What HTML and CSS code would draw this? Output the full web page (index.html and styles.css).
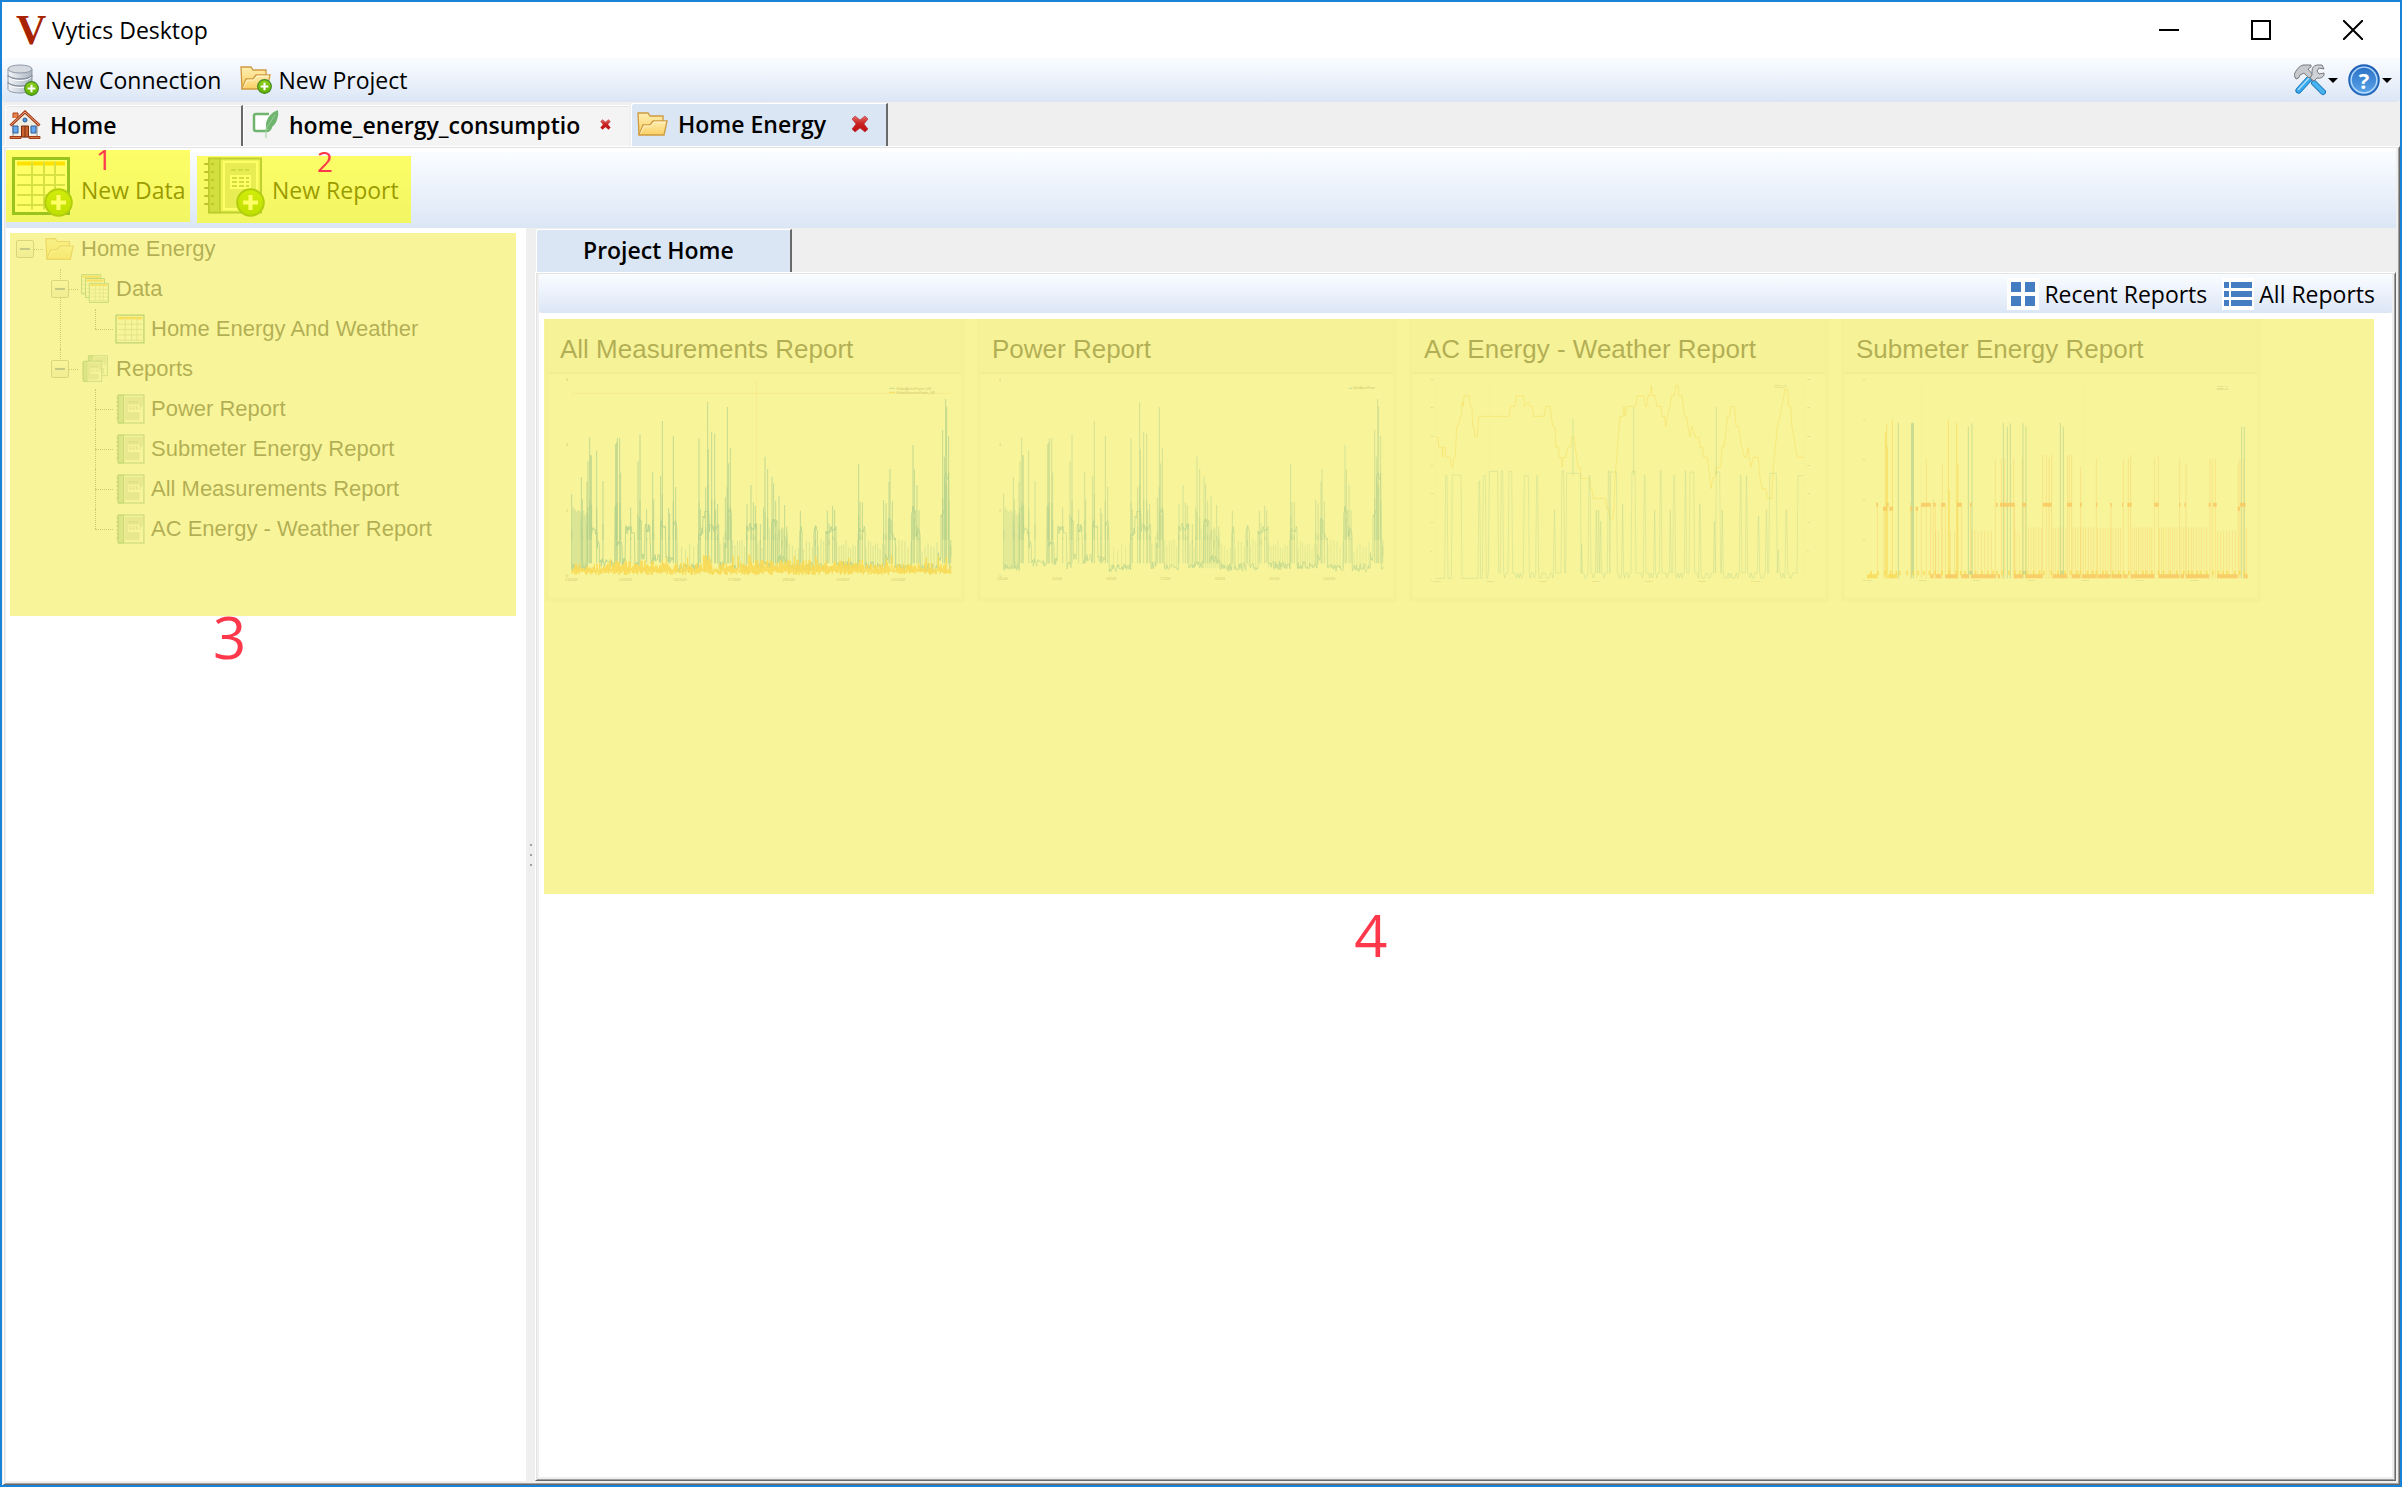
FILE: index.html
```html
<!DOCTYPE html>
<html lang="en">
<head>
<meta charset="utf-8">
<title>Vytics Desktop</title>
<link rel="stylesheet" href="styles.css">
</head>
<body>
<svg class="defs" aria-hidden="true">
  <defs>
    <linearGradient id="g-metal"><stop offset="0" stop-color="#f4f6f8"/><stop offset=".4" stop-color="#d5dbe2"/><stop offset="1" stop-color="#aab3be"/></linearGradient>
    <linearGradient id="g-folder" x2="0" y2="1"><stop offset="0" stop-color="#ffeeb0"/><stop offset="1" stop-color="#f9cf63"/></linearGradient>
    <linearGradient id="g-green" x2="0" y2="1"><stop offset="0" stop-color="#8ed01c"/><stop offset="1" stop-color="#5fb000"/></linearGradient>
    <linearGradient id="g-blue" x2="0" y2="1"><stop offset="0" stop-color="#2a6fc4"/><stop offset="1" stop-color="#5aa5ea"/></linearGradient>
    <linearGradient id="g-red" x2="0" y2="1"><stop offset="0" stop-color="#e26a66"/><stop offset=".5" stop-color="#c92020"/><stop offset="1" stop-color="#c01010"/></linearGradient>
    <symbol id="plus" viewBox="0 0 14 14">
      <circle cx="7" cy="7" r="6.4" fill="url(#g-green)" stroke="#3f8423" stroke-width="1"/>
      <path d="M7 3.4v7.2M3.4 7h7.2" stroke="#fff" stroke-width="2"/>
    </symbol>
    <symbol id="database" viewBox="0 0 32 32">
      <path d="M1 5v20c0 2 5 4 12 4s12-2 12-4V5z" fill="url(#g-metal)" stroke="#8e98a6"/>
      <path d="M1 11c0 2 5 4 12 4s12-2 12-4M1 18c0 2 5 4 12 4s12-2 12-4" fill="none" stroke="#8b95a3" stroke-width="1.4"/>
      <path d="M2 13c1 2 5 3.500 11 3.500s10-1.500 11-3.500M2 20c1 2 5 3.500 11 3.500s10-1.500 11-3.500" fill="none" stroke="#fff"/>
      <ellipse cx="13" cy="5" rx="12" ry="4" fill="#d5dae0" stroke="#8e98a6"/>
      <use href="#plus" x="17" y="17" width="15" height="15"/>
    </symbol>
    <symbol id="folder" viewBox="0 0 32 26">
      <path d="M2 24L1 2h10l2 3h13v8" fill="url(#g-folder)" stroke="#cf9a3e" stroke-width="1.300"/>
      <path d="M2 24l4-10h7l3-4h14l-3 14z" fill="url(#g-folder)" stroke="#cf9a3e" stroke-width="1.300"/>
      <path d="M3.500 22.500l3.500-7.500h7l3-4h12" fill="none" stroke="#fff6cf"/>
    </symbol>
    <symbol id="folder-plus" viewBox="0 0 32 32">
      <use href="#folder" x="0" y="1" width="32" height="26"/>
      <use href="#plus" x="17" y="15" width="15" height="15"/>
    </symbol>
    <symbol id="house" viewBox="0 0 32 30">
      <path d="M4 8V3h5v5" fill="#e8834a" stroke="#a8431a"/>
      <path d="M4 14L16 3l12 11v13H4z" fill="#efeee0" stroke="#8c8c80"/>
      <path d="M1.500 15.500L16 2l14.500 13.500" fill="none" stroke="#a33d17" stroke-width="3"/>
      <path d="M1.800 15L16 2l14.200 13" fill="none" stroke="#f0a884" stroke-width="1"/>
      <circle cx="16" cy="10" r="2" fill="#4f9bea" stroke="#2b5791"/>
      <path d="M4 16h5v7H4zM22 16h5v7h-5z" fill="#63a9f2" stroke="#355f96"/>
      <path d="M12.500 16h7v11h-7z" fill="#c8622e" stroke="#7c2d0e"/>
      <path d="M16 16v11" stroke="#7c2d0e"/>
      <path d="M1 26.500h11v2H1zM20 26.500h11v2H20z" fill="#d87a45" stroke="#a33d17"/>
    </symbol>
    <symbol id="quill" viewBox="0 0 27 31">
      <path d="M17 5H4Q2 5 2 7v13q0 2 2 2h10q4 0 5-4" fill="#fff" stroke="#70b56f" stroke-width="2.500"/>
      <path d="M26 1C20 3 15 8 14 15l0 6q9-3 11-10 2-5 1-10z" fill="#70b56f"/>
      <path d="M23 6l-9 14v9" fill="none" stroke="#9bd09a" stroke-width="1"/>
    </symbol>
    <symbol id="cross" viewBox="0 0 18 18">
      <path d="M1 4l3-3 5 4 5-4 3 3-4 5 4 5-3 3-5-4-5 4-3-3 4-5z" fill="url(#g-red)" stroke="#b03030" stroke-width=".6"/>
    </symbol>
    <symbol id="table" viewBox="0 0 28 28">
      <path d="M1 1h26v26H1z" fill="#fff" stroke="#2f8a6a" stroke-width="1.200"/>
      <path d="M2.500 2.500h23v2.500h-23z" fill="#ffb219"/>
      <path d="M2.500 9.500h23M2.500 14.500h23M2.500 19.500h23M2.500 24.500h23M9.500 2.500v23M15.500 2.500v23M20.500 2.500v23" stroke="#a9c4b8" stroke-width=".9"/>
    </symbol>
    <symbol id="tables" viewBox="0 0 30 32">
      <use href="#table" x="0" y="0" width="22" height="22"/>
      <use href="#table" x="4" y="4" width="22" height="22"/>
      <use href="#table" x="8" y="9" width="22" height="22"/>
    </symbol>
    <symbol id="book" viewBox="0 0 28 28">
      <path d="M3 1h24v26H3z" fill="#fff" stroke="#4a9a7d" stroke-width="1"/>
      <path d="M3 1h5v26H3z" fill="#9cc8b0" stroke="#3c8c6c" stroke-width=".8"/>
      <path d="M9 2.500h17v8l-3 5v9H9z" fill="#c3d2d4"/>
      <path d="M12.500 10h10.500v7h-10.500z" fill="#fff"/>
      <path d="M13 7.500h9M13.500 12h8.500M13.500 14h8.500" stroke="#6b8f8c" stroke-dasharray="2 1" stroke-width=".8"/>
      <path d="M2.500 3v23" stroke="#6f8a7c" stroke-width="2.500" stroke-dasharray="1.200 2.600"/>
    </symbol>
    <symbol id="books" viewBox="0 0 30 32">
      <use href="#book" x="6" y="0" width="23" height="25"/>
      <use href="#book" x="0" y="6" width="23" height="25"/>
    </symbol>
    <symbol id="data-new" viewBox="0 0 62 62">
      <path d="M1.500 1.500h55v55h-55z" fill="#fff" stroke="#006b4c" stroke-width="3"/>
      <path d="M5 4.500h48v4h-48z" fill="#ffb500"/>
      <path d="M5 18h48M5 28h48M5 38h48M5 48h48M20 4.500v48M32 4.500v48M43 4.500v48" stroke="#9db3a8" stroke-width="2"/>
      <use href="#plus" x="32" y="31" width="29" height="29"/>
    </symbol>
    <symbol id="report-new" viewBox="0 0 62 62">
      <path d="M5 1.500h52v54H5z" fill="#d5e0dc" stroke="#5f8a74" stroke-width="2"/>
      <path d="M5 1.500h11v54H5z" fill="#8fb09e" stroke="#5a8069" stroke-width="1.500"/>
      <path d="M20 5h33v47H20z" fill="#c2d2ce" stroke="#fff" stroke-width="2"/>
      <path d="M26 18h21v14H26z" fill="#fff"/>
      <path d="M27 13h18M28 21h17M28 25h17M28 29h17" stroke="#8aa59c" stroke-width="2" stroke-dasharray="5 2"/>
      <path d="M1 7h8M1 15h8M1 23h8M1 31h8M1 39h8M1 47h8" stroke="#5c6a62" stroke-width="2" stroke-linecap="round" stroke-dasharray="3 4"/>
      <use href="#plus" x="32" y="31" width="29" height="29"/>
    </symbol>
    <symbol id="tools" viewBox="0 0 32 32">
      <path d="M14 12l4 4-12 13q-2 1-4-1-1-2 1-4z" fill="#35a7ec" stroke="#1d77b8"/>
      <path d="M15 14L4 26" stroke="#a9dcfb" stroke-width="1.500"/>
      <path d="M20 19l9 9" stroke="#1d77b8" stroke-width="6" stroke-linecap="round"/>
      <path d="M20 19l9 9" stroke="#49b2f0" stroke-width="4" stroke-linecap="round"/>
      <path d="M0 11q3-8 9-10h8v2l-3 2 5 6-4 3-5-5-4 2q-1 4-4 4z" fill="#c7c9cc" stroke="#77797d"/>
      <path d="M28 1h-5q-5 1-5 6v4l-2 3 4 3 3-3q5 1 7-3V9l-5 1-2-3 2-3 5 1z" fill="#d0d2d5" stroke="#77797d"/>
    </symbol>
    <symbol id="help" viewBox="0 0 32 32">
      <circle cx="16" cy="16" r="15" fill="url(#g-blue)" stroke="#1f62b5" stroke-width="1.500"/>
      <circle cx="16" cy="16" r="12.800" fill="none" stroke="#b9dbfa" stroke-width="1.300"/>
    </symbol>
  </defs>
</svg>

<header class="titlebar">
  <span class="logo">V</span>
  <h1 class="title">Vytics Desktop</h1>
  <div class="window-buttons">
    <button aria-label="Minimize"><svg width="20" height="20" viewBox="0 0 20 20"><path d="M0 10h20" stroke="#000" stroke-width="2"/></svg></button>
    <button aria-label="Maximize"><svg width="20" height="20" viewBox="0 0 20 20"><path d="M1 1h18v18H1z" fill="none" stroke="#000" stroke-width="2"/></svg></button>
    <button aria-label="Close"><svg width="20" height="20" viewBox="0 0 20 20"><path d="M0 0l20 20M20 0L0 20" stroke="#000" stroke-width="2"/></svg></button>
  </div>
</header>

<nav class="toolbar main-toolbar">
  <button><svg class="i32"><use href="#database"/></svg>New Connection</button>
  <button><svg class="i32"><use href="#folder-plus"/></svg>New Project</button>
  <div class="menus">
    <button aria-label="Tools"><svg class="i32"><use href="#tools"/></svg><span class="arrow"></span></button>
    <button aria-label="Help"><span class="help-icon"><svg class="i32"><use href="#help"/></svg><b>?</b></span><span class="arrow"></span></button>
  </div>
</nav>

<div class="tabs" role="tablist">
  <div class="tab tab-home" role="tab"><svg width="32" height="30"><use href="#house"/></svg>Home</div>
  <div class="tab tab-file" role="tab"><svg width="27" height="31"><use href="#quill"/></svg>home_energy_consumptio<button class="close" aria-label="Close tab"><svg width="11" height="11"><use href="#cross"/></svg></button></div>
  <div class="tab tab-project active" role="tab"><svg width="32" height="26"><use href="#folder"/></svg>Home Energy<button class="close" aria-label="Close tab"><svg width="18" height="18"><use href="#cross"/></svg></button></div>
</div>

<main class="pane workspace">
  <div class="toolbar project-toolbar">
    <button class="marked"><svg class="i62"><use href="#data-new"/></svg>New Data</button>
    <button class="marked report"><svg class="i62"><use href="#report-new"/></svg>New Report</button>
    <span class="callout c1">1</span>
    <span class="callout c2">2</span>
  </div>
  <div class="split">
    <aside class="sidebar">
      <ul class="tree">
        <li>
          <div class="row"><button class="toggle" aria-label="Collapse"></button><svg class="node-icon" viewBox="0 0 32 26"><use href="#folder"/></svg>Home Energy</div>
          <ul>
            <li>
              <div class="row"><button class="toggle" aria-label="Collapse"></button><svg class="node-icon"><use href="#tables"/></svg>Data</div>
              <ul>
                <li><div class="row leaf"><svg class="node-icon"><use href="#table"/></svg>Home Energy And Weather</div></li>
              </ul>
            </li>
            <li>
              <div class="row"><button class="toggle" aria-label="Collapse"></button><svg class="node-icon"><use href="#books"/></svg>Reports</div>
              <ul>
                <li><div class="row leaf"><svg class="node-icon"><use href="#book"/></svg>Power Report</div></li>
                <li><div class="row leaf"><svg class="node-icon"><use href="#book"/></svg>Submeter Energy Report</div></li>
                <li><div class="row leaf"><svg class="node-icon"><use href="#book"/></svg>All Measurements Report</div></li>
                <li><div class="row leaf"><svg class="node-icon"><use href="#book"/></svg>AC Energy - Weather Report</div></li>
              </ul>
            </li>
          </ul>
        </li>
      </ul>
      <div class="highlight"></div>
      <span class="callout c3">3</span>
    </aside>
    <div class="splitter"><i></i><i></i><i></i></div>
    <section class="project">
      <div class="tabs inner-tabs" role="tablist"><div class="tab active" role="tab">Project Home</div></div>
      <div class="pane project-pane">
        <div class="toolbar report-toolbar">
          <button><svg class="i32 boxed" viewBox="0 0 32 32"><path d="M4 4h10v10H4zM18 4h10v10H18zM4 18h10v10H4zM18 18h10v10H18z" fill="#457dc3"/></svg>Recent Reports</button>
          <button><svg class="i32 boxed" viewBox="0 0 32 32"><path d="M2 4h5v6H2zM9 4h21v6H9zM2 13h5v6H2zM9 13h21v6H9zM2 22h5v6H2zM9 22h21v6H9z" fill="#457dc3"/></svg>All Reports</button>
        </div>
        <div class="gallery">
          <div class="cards">
            <article class="card"><h2>All Measurements Report</h2><svg class="chart" id="chart-all"></svg></article>
            <article class="card"><h2>Power Report</h2><svg class="chart" id="chart-power"></svg></article>
            <article class="card"><h2>AC Energy - Weather Report</h2><svg class="chart" id="chart-weather"></svg></article>
            <article class="card"><h2>Submeter Energy Report</h2><svg class="chart" id="chart-submeter"></svg></article>
          </div>
          <div class="highlight"></div>
          <span class="callout c4">4</span>
        </div>
      </div>
    </section>
  </div>
</main>
<script src="charts.js"></script>
</body>
</html>
```
FILE: styles.css
```css
* { box-sizing: border-box; }

body {
  margin: 0;
  height: 100vh;
  display: flex;
  flex-direction: column;
  border: 2px solid #1883d7;
  background: #efefef;
  color: #000;
  font: 23px/32px "Open Sans", "Noto Sans", sans-serif;
}

button {
  display: flex;
  align-items: center;
  margin: 0;
  padding: 0;
  border: 0;
  background: none;
  color: inherit;
  font: inherit;
  white-space: nowrap;
}

svg { display: block; flex: none; }
.defs { position: absolute; width: 0; height: 0; }
.i32 { width: 32px; height: 32px; }
.i62 { width: 62px; height: 62px; }
.boxed { background: #fff; }

/* Window title */
.titlebar {
  display: flex;
  align-items: center;
  height: 56px;
  padding: 0 1px 0 14px;
  background: #fff;
}
.logo {
  width: 36px;
  color: #a82400;
  font: bold 42px/42px "Liberation Serif", serif;
}
.title { margin: 0; font-size: 23px; font-weight: 400; }
.window-buttons { display: flex; margin-left: auto; }
.window-buttons button { width: 92px; height: 54px; justify-content: center; }

/* Toolbars */
.toolbar {
  display: flex;
  align-items: center;
  flex: none;
  background: linear-gradient(#fafdff, #f0f5fd 35%, #dbe6f5);
}
.main-toolbar { height: 44px; padding: 0 8px 0 5px; gap: 19px; border-radius: 0 0 4px 4px; }
.main-toolbar button { gap: 6px; }
.menus { display: flex; gap: 10px; margin-left: auto; }
.main-toolbar .menus button { gap: 2px; }
.arrow { border: 5px solid transparent; border-top-color: #000; border-bottom: 0; }
.help-icon { position: relative; }
.help-icon b {
  position: absolute;
  inset: 0;
  color: #fff;
  font-size: 22px;
  text-align: center;
}

/* Tabs */
.tabs { display: flex; align-items: flex-end; flex: none; height: 44px; padding-left: 3px; }
.tab {
  display: flex;
  align-items: center;
  height: 41px;
  padding-bottom: 3px;
  border: 1px solid #fff;
  border-right: 2px solid #f0f0f0;
  border-bottom: 0;
  border-radius: 3px 0 0 0;
  background: #f4f4f4;
  box-shadow: inset 0 1px #e3e3e3;
  font-weight: 600;
}
.tab.active {
  height: 43px;
  border-right-color: #696969;
  background: #dae6f4;
  box-shadow: none;
}
.close { margin-left: auto; }
.tab-home { width: 238px; padding-left: 3px; gap: 9px; border-right-color: #696969; }
.tab-file { width: 388px; padding-left: 8px; padding-right: 18px; gap: 10px; }
.tab-project { width: 257px; padding-left: 5px; padding-right: 17px; gap: 9px; }

/* Raised frames */
.pane {
  display: flex;
  flex-direction: column;
  flex: 1;
  min-height: 0;
  border: 1px solid;
  border-color: #fff #696969 #696969 #fff;
  background: #efefef;
  box-shadow: inset 1px 1px #e3e3e3, inset -1px -1px #a0a0a0;
}
.workspace { margin-left: 1px; padding: 1px 3px 3px 2px; }

.project-toolbar {
  position: relative;
  height: 80px;
  border-top: 4px solid #fff;
  align-items: stretch;
  gap: 7px;
}
.project-toolbar button { position: relative; padding: 0 6px; gap: 7px; width: 184px; }
.project-toolbar .report { padding: 0 7px; gap: 6px; width: 214px; }
.project-toolbar button svg { margin-top: -4px; }
.marked::after {
  content: "";
  position: absolute;
  inset: -2px 0 6px;
  background: rgba(255, 255, 0, .6);
}
.marked.report::after { inset: 4px 0 5px; }

.split { display: flex; flex: 1; min-height: 0; }
.splitter {
  display: flex;
  flex-direction: column;
  align-items: center;
  justify-content: center;
  gap: 8px;
  width: 9px;
}
.splitter i { width: 2px; height: 2px; background: #a0a0a0; }

/* Project tree */
.sidebar { position: relative; width: 520px; background: #fff; }
.tree, .tree ul { margin: 0; padding: 0; list-style: none; }
.sidebar .tree { padding: 1px 0 0 10px; font: 22px/40px "Liberation Sans", Arial, sans-serif; }
.tree ul { margin-left: 35px; }
.tree li { position: relative; }
.tree ul > li::before {
  content: "";
  position: absolute;
  left: 9px;
  top: 0;
  bottom: 0;
  border-left: 1px dotted #666;
}
.tree ul > li:last-child::before { bottom: auto; height: 20px; }
.row { position: relative; display: flex; align-items: center; height: 40px; }
.row::before {
  content: "";
  position: absolute;
  left: 9px;
  top: 20px;
  width: 18px;
  border-top: 1px dotted #666;
}
.leaf { padding-left: 29px; }
.toggle {
  position: relative;
  width: 18px;
  height: 18px;
  margin-right: 11px;
  justify-content: center;
  border: 1px solid #919191;
  border-radius: 2px;
  background: linear-gradient(#fff, #e4e4e4);
}
.toggle::before { content: ""; width: 10px; height: 2px; background: #4b63a7; }
.node-icon { width: 30px; height: 30px; margin-right: 6px; }

/* Project area */
.project { display: flex; flex-direction: column; flex: 1; min-width: 0; }
.inner-tabs { padding-left: 1px; }
.inner-tabs .tab { width: 256px; padding-left: 46px; }
.project-pane { padding: 1px 3px 3px; }
.report-toolbar { height: 39px; padding-right: 17px; gap: 15px; justify-content: flex-end; border-radius: 0 0 4px 4px; }
.report-toolbar button { gap: 5px; }
.gallery { position: relative; flex: 1; padding: 6px; background: #fff; }
.cards { display: flex; flex-wrap: wrap; gap: 12px; }
.card { width: 420px; border: 4px solid #f4f4f4; border-top: 0; background: #fff; }
.card h2 {
  margin: 0;
  padding: 6px 11px 0;
  height: 55px;
  border-bottom: 2px solid #e4e4e4;
  background: #f6f6f6;
  font: 26px/48px "Liberation Sans", Arial, sans-serif;
}
.chart { width: 412px; height: 224px; }
.chart text { fill: #555; font-family: "Liberation Sans", Arial, sans-serif; }

/* Annotations */
.highlight { position: absolute; background: rgba(245, 240, 116, .725); }
.sidebar .highlight { left: 4px; right: 10px; top: 5px; height: 383px; }
.gallery .highlight { left: 5px; right: 18px; top: 6px; height: 575px; }
.callout { position: absolute; color: #fd384b; font-size: 28px; font-weight: 500; line-height: 20px; }
.c1 { left: 90px; top: -3px; }
.c2 { left: 311px; top: -1px; }
.c3, .c4 { font-size: 58px; line-height: 64px; }
.c3 { left: 207px; top: 377px; }
.c4 { left: 44%; top: 590px; }
```
FILE: charts.js
```javascript
// Report thumbnails. Chart space is three units to the pixel.
(function () {
  var BLUE = '#0b83c8', GOLD = '#ff9d00', ORANGE = '#ff6232';

  function random(seed) {
    return function () {
      seed = (seed * 16807) % 2147483647;
      return seed / 2147483647;
    };
  }
  function line(d, color, width, opacity) {
    return '<path d="' + d + '" fill="none" stroke="' + color + '" stroke-width="' + width +
      '" stroke-opacity="' + opacity + '"/>';
  }
  function poly(points) {
    return 'M' + points.map(function (p) { return p[0] + ' ' + p[1]; }).join('L');
  }
  function bars(list, base) {
    return list.map(function (p) { return 'M' + p[0] + ' ' + base + 'V' + p[1]; }).join('');
  }
  function label(x, y, size, text) {
    return '<text x="' + x + '" y="' + y + '" font-size="' + size + '">' + text + '</text>';
  }
  function draw(id, x, content) {
    var svg = document.getElementById(id);
    svg.setAttribute('viewBox', x + ' 222 1236 672');
    svg.innerHTML = content;
  }

  // Household power: level segments [from, to, y] and spikes [x, y].
  var levels = [[94,143,800],[143,155,620],[155,171,692],[172,178,735],[178,225,788],[225,230,620],[230,247,730],[247,256,785],
    [257,284,688],[285,298,800],[298,304,660],[304,315,768],[315,330,685],[333,345,780],[345,362,775],[362,377,670],
    [378,400,775],[400,410,670],[412,476,803],[476,488,695],[489,508,645],[508,537,683],[537,553,795],[553,562,740],
    [562,575,640],[575,620,797],[620,650,680],[650,695,793],[695,712,670],[712,745,778],[745,780,803],[780,786,690],
    [786,822,800],[822,832,690],[832,858,803],[858,888,690],[888,955,797],[955,975,685],[975,1037,797],[1037,1045,770],
    [1045,1054,660],[1054,1066,710],[1066,1115,805],[1115,1128,630],[1128,1141,697],[1141,1195,803],[1195,1203,770],
    [1203,1214,640],[1214,1226,530],[1228,1234,805]];
  var spikes = [[95,582],[124,531],[127,598],[141,545],[144,484],[149,412],[152,465],[154,466],[170,452],[189,543],[227,432],[230,427],
    [232,415],[239,415],[242,518],[272,622],[294,484],[300,404],[320,628],[338,516],[341,598],[362,527],[367,363],[386,624],
    [389,640],[400,408],[407,561],[477,415],[481,627],[497,562],[503,306],[505,448],[515,395],[524,401],[527,630],[533,612],
    [556,592],[562,321],[566,490],[571,444],[621,612],[633,555],[640,607],[646,617],[661,672],[671,622],[675,470],[683,507],
    [696,530],[701,550],[707,602],[717,588],[726,682],[734,615],[740,680],[781,632],[826,676],[862,632],[867,670],[878,617],
    [884,630],[956,492],[960,606],[967,607],[1031,600],[1038,610],[1047,545],[1050,507],[1057,604],[1119,435],[1123,508],
    [1131,555],[1137,630],[1208,390],[1213,470],[1217,297],[1220,320],[1226,408],[1232,738]];
  var combs = [[98,142,3,632],[425,476,12,745],[540,553,10,722],[578,620,7,730],[654,668,6,735],[688,745,6,700],[748,780,9,738],
    [790,822,9,738],[835,858,8,730],[890,955,7,730],[978,1037,7,732],[1068,1115,9,732],[1146,1198,9,740]];

  function household(dx, weight) {
    var rnd = random(7), pts = [], comb = [];
    levels.forEach(function (s) {
      for (var x = s[0]; x <= s[1]; x += 2) pts.push([x + dx, Math.round(s[2] + (rnd() - 0.5) * 26)]);
    });
    combs.forEach(function (c) {
      for (var x = c[0]; x < c[1]; x += c[2]) comb.push([x + dx, Math.round(c[3] + (rnd() - 0.5) * 30)]);
    });
    var peaks = spikes.map(function (p) { return [p[0] + dx, p[1]]; });
    var lower = spikes.map(function (p) { return [p[0] + dx, Math.round(p[1] + (800 - p[1]) * 0.5)]; });
    return line(poly(pts), BLUE, 3, 0.8 * weight) + line(bars(comb, 805), BLUE, 2, 0.7 * weight) +
      line(bars(peaks, 790), BLUE, 3, 0.8 * weight) + line(bars(lower, 720), BLUE, 4, 0.6 * weight);
  }

  function dates(start, step, y, size) {
    var out = '';
    for (var i = 0; i < 7; i++) out += label(start + i * step - 20, y, size, '1/' + (4 + i) + '/2009');
    return out;
  }
  function grid(left, step, top, bottom, right) {
    var d = '';
    for (var i = 0; i < 7; i++) d += 'M' + (left + i * step) + ' ' + top + 'V' + bottom;
    return line(d + 'M' + left + ' ' + top + 'H' + right + 'V' + bottom + 'H' + left, '#ddd', 2, 0.3);
  }

  var rnd = random(31), reactive = [];
  for (var x = 95; x <= 1234; x += 2) {
    var lift = (x > 490 && x < 512) ? 30 : (x > 225 && x < 345) ? 8 : (x > 600 && x < 960) ? 10 : 0;
    reactive.push([x, Math.round(x % 4 === 1 ? 825 - rnd() * 12 : 812 - lift - rnd() * 24 - (rnd() > 0.93 ? 22 : 0))]);
  }
  var ticks = [[244, '6'], [439, '4'], [635, '2'], [831, '0']];
  function axis(x, size) {
    return ticks.map(function (t) { return label(x, t[0], size, t[1]); }).join('');
  }

  draw('chart-all', 27, grid(94, 163, 240, 827, 1234) +
    line('M94 280H1234M649 240V827', '#ff8a3a', 2, 0.4) + household(0, 1) +
    line(poly(reactive), GOLD, 3, 0.9) + axis(78, 11) + dates(94, 163, 842, 10) +
    line('M1047 265h18', BLUE, 3, 0.7) + line('M1047 277h18', GOLD, 3, 0.9) +
    label(1069, 269, 10, 'GlobalActivePower_kW') + label(1069, 281, 10, 'GlobalReactivePower_kW'));

  draw('chart-power', 33, grid(100, 163, 240, 827, 1240) + household(6, 0.7) + axis(88, 9) +
    dates(102, 163, 841, 8) + line('M1136 265h10', BLUE, 3, 0.7) + label(1148, 268, 8, 'GlobalActivePower'));

  // Air conditioner energy against temperature.
  var temperature = [[108,412],[114,412],[116,442],[126,442],[128,472],[130,442],[136,442],[138,472],[150,472],[156,502],[159,502],
    [162,472],[166,472],[170,380],[176,378],[180,349],[184,349],[187,305],[190,318],[192,287],[208,287],[211,318],[216,320],
    [218,380],[222,380],[225,410],[232,410],[236,349],[328,349],[331,319],[345,319],[349,287],[370,287],[374,319],[386,306],
    [388,319],[397,319],[401,349],[432,349],[437,319],[450,319],[454,349],[458,378],[465,380],[468,442],[475,442],[478,472],
    [484,472],[487,502],[490,472],[498,472],[503,442],[512,442],[514,412],[523,412],[526,442],[530,472],[534,502],[540,502],
    [543,535],[569,535],[572,566],[576,566],[579,595],[616,595],[620,627],[626,627],[630,658],[638,658],[642,627],[645,535],
    [650,472],[655,412],[660,349],[669,349],[672,319],[675,349],[682,319],[708,319],[711,287],[732,287],[735,319],[740,319],
    [744,287],[750,287],[754,257],[758,287],[766,287],[770,319],[782,319],[786,349],[793,349],[797,380],[802,349],[810,319],
    [814,287],[822,287],[828,256],[834,257],[837,287],[846,287],[850,319],[854,349],[860,349],[864,380],[870,410],[876,380],
    [882,395],[886,412],[896,412],[900,442],[908,442],[911,472],[922,472],[926,502],[933,566],[938,535],[944,535],[948,502],
    [962,502],[966,442],[972,442],[976,412],[982,349],[989,349],[992,319],[1003,319],[1008,378],[1017,380],[1020,412],
    [1026,442],[1034,472],[1040,472],[1044,442],[1052,502],[1060,472],[1075,472],[1080,535],[1086,566],[1097,566],[1102,595],
    [1115,595],[1120,500],[1126,442],[1132,380],[1140,349],[1145,319],[1150,300],[1154,268],[1163,268],[1166,319],[1172,319],
    [1176,380],[1182,412],[1186,442],[1192,472],[1212,472]];
  // Cooling runs: [start, end, top].
  var runs = [[136,142,527],[156,184,525],[236,240,543],[249,257,527],[267,294,514],[303,309,512],[326,336,514],[372,386,527],
    [409,414,527],[462,465,630],[485,492,512],[499,542,520],[544,546,733],[566,571,527],[588,590,630],[595,597,630],
    [601,603,664],[624,628,512],[631,650,516],[667,669,612],[695,706,514],[732,736,527],[763,765,630],[780,784,512],
    [810,812,630],[820,825,527],[855,858,512],[869,882,516],[898,901,612],[942,944,664],[948,960,516],[966,968,630],
    [1020,1024,527],[1038,1041,527],[1074,1077,648],[1098,1101,630],[1108,1130,520],[1134,1136,750],[1157,1161,630],[1193,1212,527]];
  var ac = [[108,835]];
  runs.forEach(function (r, i) {
    var end = r[0] - 2, flat = end < 260;
    for (var x = ac[ac.length - 1][0] + 3; x < end; x += 4) ac.push([x, flat ? 835 : rnd() > 0.45 ? 819 : 834]);
    ac.push([r[0] - 2, flat ? 835 : 819], [r[0] + 1, r[2]], [r[1] - 1, r[2]]);
    if (i < runs.length - 1) ac.push([r[1] + 2, r[1] < 260 ? 835 : 819]);
  });
  var scale = '';
  for (var k = 0; k < 8; k++) {
    scale += label(92, 239 + k * 86, 7, String(35 - k * 5)) + label(1222, 239 + k * 86, 7, String(35 - k * 5));
  }
  draw('chart-weather', 39, grid(108, 159, 236, 835, 1212) + line(poly(temperature), GOLD, 3, 0.45) +
    line(poly(ac), BLUE, 3, 0.35) + line(bars([[519,357],[701,321],[949,321]], 525), BLUE, 3, 0.5) + scale +
    dates(119, 159, 845, 6) + label(1120, 259, 6, 'ACEnergy_Wh') + label(1124, 265, 6, 'Temperature'));

  // Submeters: kitchen, laundry and climate.
  var S = 1.0945;
  function sx(list) { return list.map(function (p) { return [Math.round(p[0] * S), p[1]]; }); }
  var kitchen = sx([[187,368],[224,370],[228,370],[379,380],[389,370],[475,368],[486,380],[494,370],[529,370],[537,380],
    [631,368],[640,380],[1128,380],[1136,380]]);
  var laundry = sx([[152,395],[155,370],[157,440],[171,357],[324,357],[327,570],[347,368],[351,490]]);
  var climate = sx([[130,606],[148,620],[221,608],[238,622],[250,608],[264,476],[276,610],[283,596],[289,608],[305,610],[308,490],
    [316,610],[349,600],[361,608],[386,610],[453,476],[470,476],[479,476],[503,476],[506,610],[527,476],[535,610],[583,464],
    [593,464],[600,476],[608,464],[651,464],[656,466],[662,464],[687,500],[730,476],[770,610],[804,476],[818,476],[824,464],
    [889,476],[900,466],[958,476],[976,490],[1042,476],[1048,478],[1056,476],[1119,490],[1124,476],[1134,476],[1141,682]]);
  var caps = [[127,132,614],[145,156,626],[155,161,614],[163,173,626],[220,226,626],[235,241,626],[250,276,614],[283,289,614],
    [305,315,614],[348,361,614],[384,388,614],[455,460,614],[466,506,614],[527,537,614],[584,608,614],[650,663,614],
    [685,690,614],[729,733,614],[768,772,614],[800,803,614],[815,827,614],[889,901,614],[957,960,614],[971,975,614],
    [1038,1043,614],[1050,1060,614],[1117,1124,626],[1124,1139,614]];
  var floor = [[275,283],[290,304],[316,349],[360,381],[388,454],[460,466],[504,528],[536,583],[610,650],[663,685],[691,730],
    [733,768],[772,800],[804,816],[825,889],[902,957],[960,970],[976,1039],[1061,1117],[1135,1145]];
  function blocks(list) {
    return list.map(function (c) {
      return 'M' + Math.round(c[0] * S) + ' ' + (c[2] || 829) + 'H' + Math.round(c[1] * S);
    }).join('');
  }
  var teeth = [], dashes = [];
  [[290,300,7,692],[330,345,12,692],[388,450,9,692],[510,524,8,692],[544,583,7,682],[612,648,7,682],[666,728,7,682],
    [734,800,7,684],[828,888,6,682],[903,956,6,682],[962,1037,7,682],[1063,1115,8,692]].forEach(function (t) {
    for (var x = t[0]; x < t[1]; x += t[2]) teeth.push([Math.round(x * S), t[3]]);
  });
  for (x = 112; x < 1138; x += 9 + Math.floor(rnd() * 12)) dashes.push([Math.round(x * S), 812]);
  var marks = '';
  for (k = 0; k < 6; k++) marks += label(98, 239 + k * 120, 7, String(50 - k * 10));

  draw('chart-submeter', 45, grid(110, 163, 236, 835, 1252) + line(bars(teeth, 835), ORANGE, 3, 0.35) +
    line(bars(climate, 835), ORANGE, 3, 0.4) + line(bars(laundry, 835), GOLD, 3, 0.65) +
    line(bars(kitchen, 835), BLUE, 3, 0.65) + line('M248 368V825', BLUE, 6, 0.6) +
    line(bars(dashes, 826), GOLD, 5, 0.8) + line(blocks(caps), ORANGE, 12, 0.85) + line(blocks(floor), ORANGE, 12, 0.85) +
    line('M111 829H141M175 829H202', GOLD, 12, 0.8) + line('M416 818h12M578 818h10M692 818h8', BLUE, 10, 0.6) +
    marks + dates(122, 163, 844, 6) +
    label(1160, 261, 6, 'Kitchen_Wh') + label(1160, 266, 6, 'Laundry_Wh') + label(1160, 271, 6, 'Climate_Wh'));
})();
```
